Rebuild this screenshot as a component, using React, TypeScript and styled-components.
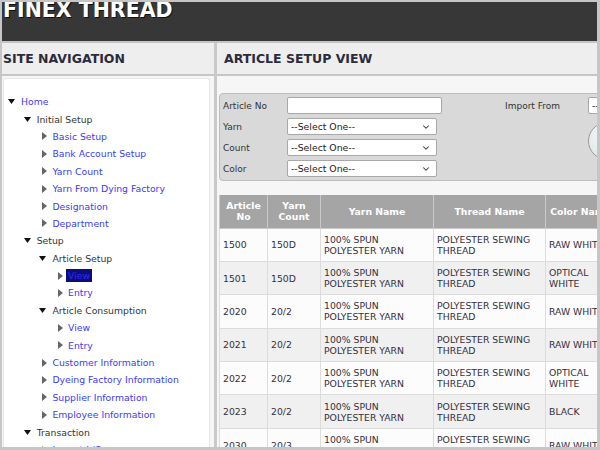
import React from 'react';
import styled, { createGlobalStyle } from 'styled-components';
import { ChevronDown } from 'lucide-react';

const GlobalStyle = createGlobalStyle`
  html, body {
    margin: 0;
    padding: 0;
    background: #fff;
  }
  * {
    box-sizing: border-box;
  }
`;

const font = `"DejaVu Sans", Verdana, sans-serif`;

const Frame = styled.div`
  width: 600px;
  height: 450px;
  overflow: hidden;
  border: 2px solid #c6c6c6;
  border-right-width: 3px;
  border-bottom-width: 3px;
  display: flex;
  flex-direction: column;
  font-family: ${font};
  background: #f6f6f6;
`;

const TopBar = styled.header`
  height: 41px;
  flex: none;
  background: #373737;
  border-bottom: 2px solid #c4c4c4;
  padding-left: 1px;
  overflow: hidden;
`;

const Brand = styled.h1`
  margin: -2px 0 0;
  font-size: 20.5px;
  line-height: 1;
  font-weight: bold;
  color: #fff;
  text-shadow: 1px 1px 0 #111;
`;

const Main = styled.div`
  flex: 1;
  min-height: 0;
  display: flex;
`;

const Sidebar = styled.aside`
  width: 215px;
  flex: none;
  display: flex;
  flex-direction: column;
  border-right: 3px solid #c9c9c9;
`;

const PanelHeader = styled.h2<{ $indent: number }>`
  margin: 0;
  height: 33px;
  flex: none;
  display: flex;
  align-items: center;
  padding-left: ${(p) => p.$indent}px;
  background: #eeeeee;
  border-bottom: 2px solid #c6c6c6;
  font-size: 12.5px;
  font-weight: bold;
  color: #2b2b3c;
`;

const NavBody = styled.nav`
  flex: 1;
  margin: 2px 4px 0 1px;
  padding-top: 14px;
  background: #fff;
  border: 1px solid #e6e6e6;
  border-bottom: none;
  border-radius: 3px 3px 0 0;
  overflow: hidden;
`;

const TreeRow = styled.div<{ $level: number }>`
  height: 17.4px;
  display: flex;
  align-items: center;
  padding-left: ${(p) => 3 + p.$level * 15.7}px;
  font-size: 9.3px;
  white-space: nowrap;
`;

const Toggle = styled.span<{ $open: boolean }>`
  width: 12px;
  flex: none;
  display: flex;
  align-items: center;
  padding-left: ${(p) => (p.$open ? 1 : 4)}px;
`;

const TreeLabel = styled.span<{ $link: boolean; $selected: boolean }>`
  padding: 1px 2px;
  color: ${(p) => (p.$selected ? '#2a2aff' : p.$link ? '#3b3bf2' : '#333')};
  background: ${(p) => (p.$selected ? '#0d0d7a' : 'transparent')};
`;

const Content = styled.section`
  flex: 1;
  min-width: 0;
  display: flex;
  flex-direction: column;
  overflow: hidden;
`;

const ContentBody = styled.div`
  flex: 1;
  padding: 17px 0 0 2px;
  overflow: hidden;
`;

const FilterBox = styled.div`
  width: 460px;
  display: flex;
  padding: 3px 0 3px 3px;
  background: #d9d9d9;
  border: 1px solid #bdbdbd;
  border-radius: 4px;
`;

const FieldColumn = styled.div`
  display: flex;
  flex-direction: column;
  gap: 4px;
`;

const FieldRow = styled.div`
  height: 17px;
  display: flex;
  align-items: center;
`;

const Label = styled.span<{ $width: number }>`
  width: ${(p) => p.$width}px;
  flex: none;
  font-size: 9px;
  color: #333;
`;

const TextInput = styled.div`
  width: 155px;
  height: 17px;
  background: #fff;
  border: 1px solid #a8a8a8;
  border-radius: 2px;
`;

const SelectBox = styled.div<{ $width: number }>`
  width: ${(p) => p.$width}px;
  height: 17px;
  display: flex;
  align-items: center;
  justify-content: space-between;
  padding: 0 5px 0 3px;
  background: #fff;
  border: 1px solid #a8a8a8;
  border-radius: 2px;
  font-size: 9.3px;
  color: #222;
  white-space: nowrap;
  overflow: hidden;
`;

const ImportGroup = styled.div`
  margin-left: 63px;
  display: flex;
  flex-direction: column;
`;

const RoundButton = styled.div`
  width: 38px;
  height: 38px;
  margin: 8px 0 0 83px;
  border-radius: 50%;
  border: 1px solid #9a9a9a;
  background: radial-gradient(circle at 40% 35%, #f4f8f8, #d5dfe1);
`;

const Grid = styled.table`
  margin-top: 14px;
  width: 396px;
  table-layout: fixed;
  border-collapse: collapse;
  font-size: 9.3px;
`;

const HeadCell = styled.th<{ $width: number }>`
  width: ${(p) => p.$width}px;
  height: 33px;
  padding: 0 2px;
  background: #a5a5a5;
  border: 1px solid #c9c9c9;
  border-top: none;
  color: #fff;
  font-weight: bold;
  line-height: 11px;
  text-align: center;
  white-space: nowrap;
  overflow: hidden;
`;

const BodyRow = styled.tr<{ $shade: boolean }>`
  background: ${(p) => (p.$shade ? '#f0f0f0' : '#fcfcfc')};
`;

const Cell = styled.td<{ $wrap?: boolean }>`
  height: 33.4px;
  padding: 0 3px;
  border: 1px solid #dcdcdc;
  color: #35303c;
  line-height: 11px;
  vertical-align: middle;
  white-space: ${(p) => (p.$wrap ? 'normal' : 'nowrap')};
  overflow: hidden;
`;

interface NavNode {
  label: string;
  link?: boolean;
  open?: boolean;
  selected?: boolean;
  children?: NavNode[];
}

const nav: NavNode[] = [
  {
    label: 'Home',
    link: true,
    open: true,
    children: [
      {
        label: 'Initial Setup',
        open: true,
        children: [
          { label: 'Basic Setup', link: true },
          { label: 'Bank Account Setup', link: true },
          { label: 'Yarn Count', link: true },
          { label: 'Yarn From Dying Factory', link: true },
          { label: 'Designation', link: true },
          { label: 'Department', link: true },
        ],
      },
      {
        label: 'Setup',
        open: true,
        children: [
          {
            label: 'Article Setup',
            open: true,
            children: [
              { label: 'View', link: true, selected: true },
              { label: 'Entry', link: true },
            ],
          },
          {
            label: 'Article Consumption',
            open: true,
            children: [
              { label: 'View', link: true },
              { label: 'Entry', link: true },
            ],
          },
          { label: 'Customer Information', link: true },
          { label: 'Dyeing Factory Information', link: true },
          { label: 'Supplier Information', link: true },
          { label: 'Employee Information', link: true },
        ],
      },
      {
        label: 'Transaction',
        open: true,
        children: [{ label: 'Import L/C', link: true }],
      },
    ],
  },
];

const articles = [
  ['1500', '150D', 'RAW WHITE'],
  ['1501', '150D', 'OPTICAL WHITE'],
  ['2020', '20/2', 'RAW WHITE'],
  ['2021', '20/2', 'RAW WHITE'],
  ['2022', '20/2', 'OPTICAL WHITE'],
  ['2023', '20/2', 'BLACK'],
  ['2030', '20/3', 'RAW WHITE'],
];

const Arrow = ({ open }: { open: boolean }) =>
  open ? (
    <svg width="7" height="5" viewBox="0 0 7 5">
      <path d="M0 0h7L3.5 5z" fill="#111" />
    </svg>
  ) : (
    <svg width="5" height="8" viewBox="0 0 5 8">
      <path d="M0 0l5 4-5 4z" fill="#666" />
    </svg>
  );

const renderTree = (nodes: NavNode[], level = 0): React.ReactNode[] =>
  nodes.flatMap((n, i) => [
    <TreeRow key={`${level}-${i}-${n.label}`} $level={level}>
      <Toggle $open={!!n.open}>
        <Arrow open={!!n.open} />
      </Toggle>
      <TreeLabel $link={!!n.link} $selected={!!n.selected}>
        {n.label}
      </TreeLabel>
    </TreeRow>,
    ...(n.open && n.children ? renderTree(n.children, level + 1) : []),
  ]);

const Select = ({ width, text }: { width: number; text: string }) => (
  <SelectBox $width={width}>
    <span>{text}</span>
    <ChevronDown size={10} strokeWidth={2.5} color="#333" />
  </SelectBox>
);

const App = (): React.ReactElement => (
  <>
    <GlobalStyle />
    <Frame>
      <TopBar>
        <Brand>FINEX THREAD</Brand>
      </TopBar>
      <Main>
        <Sidebar>
          <PanelHeader $indent={1}>SITE NAVIGATION</PanelHeader>
          <NavBody>{renderTree(nav)}</NavBody>
        </Sidebar>
        <Content>
          <PanelHeader $indent={7}>ARTICLE SETUP VIEW</PanelHeader>
          <ContentBody>
            <FilterBox>
              <FieldColumn>
                <FieldRow>
                  <Label $width={64}>Article No</Label>
                  <TextInput />
                </FieldRow>
                <FieldRow>
                  <Label $width={64}>Yarn</Label>
                  <Select width={150} text="--Select One--" />
                </FieldRow>
                <FieldRow>
                  <Label $width={64}>Count</Label>
                  <Select width={150} text="--Select One--" />
                </FieldRow>
                <FieldRow>
                  <Label $width={64}>Color</Label>
                  <Select width={150} text="--Select One--" />
                </FieldRow>
              </FieldColumn>
              <ImportGroup>
                <FieldRow>
                  <Label $width={83}>Import From</Label>
                  <Select width={80} text="--Select One--" />
                </FieldRow>
                <RoundButton />
              </ImportGroup>
            </FilterBox>
            <Grid>
              <thead>
                <tr>
                  <HeadCell $width={48}>
                    Article
                    <br />
                    No
                  </HeadCell>
                  <HeadCell $width={53}>
                    Yarn
                    <br />
                    Count
                  </HeadCell>
                  <HeadCell $width={113}>Yarn Name</HeadCell>
                  <HeadCell $width={112}>Thread Name</HeadCell>
                  <HeadCell $width={70}>Color Name</HeadCell>
                </tr>
              </thead>
              <tbody>
                {articles.map(([no, count, color], i) => (
                  <BodyRow key={no} $shade={i % 2 === 1}>
                    <Cell>{no}</Cell>
                    <Cell>{count}</Cell>
                    <Cell>
                      100% SPUN
                      <br />
                      POLYESTER YARN
                    </Cell>
                    <Cell>
                      POLYESTER SEWING
                      <br />
                      THREAD
                    </Cell>
                    <Cell $wrap>{color}</Cell>
                  </BodyRow>
                ))}
              </tbody>
            </Grid>
          </ContentBody>
        </Content>
      </Main>
    </Frame>
  </>
);

export default App;
